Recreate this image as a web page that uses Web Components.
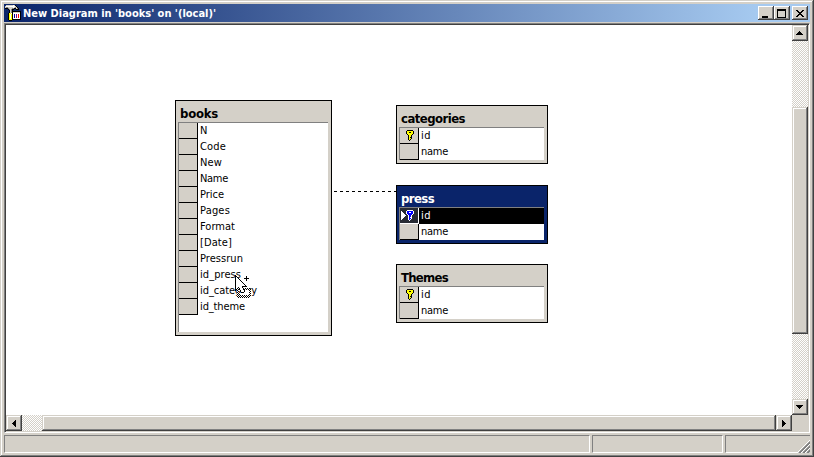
<!DOCTYPE html>
<html lang="en"><head><meta charset="utf-8"><title>New Diagram in 'books' on '(local)'</title>
<style>html,body{margin:0;width:814px;height:457px;overflow:hidden;background:#d4d0c8}body{font:11px "DejaVu Sans Condensed","DejaVu Sans",sans-serif;font-stretch:condensed;color:#000}</style></head>
<body><diagram-window></diagram-window>
<script>
const define=(name,css,html,setup)=>customElements.define(name,class extends HTMLElement{
  connectedCallback(){
    if(this.shadowRoot)return;
    const root=this.attachShadow({mode:'open'});
    root.innerHTML=`<style>*{box-sizing:border-box}:host{box-sizing:border-box}${css}</style>${html}`;
    if(setup)setup(this,root);
  }
});

// Bitmap icons: one character per pixel.
const palettes={K:'#000',Y:'#ffff00',W:'#fff',G:'#808080',L:'#d4d0c8',B:'#0000ff',D:'#404040',P:'#800080',R:'#ff0000',N:'#0000a0',O:'#808000'};
const key=[
'.kkkkkk.',
'kffffffk',
'kffkkffk',
'kffffffk',
'.kffffk.',
'..kffk..',
'..kffk..',
'..kfkk..',
'..kffk..',
'..kfk...',
'...k....'];
const paint=(a,k,f)=>a.map(r=>r.replace(/k/g,k).replace(/f/g,f));
const icons={
key:paint(key,'K','Y'),
keySelected:paint(key,'W','B'),
design:[
'.LLLLLLLWLK.....',
'LWWWWWWWWWLK....',
'LGGLLLLLWLGLK...',
'KKKGLLLGGKKLGK..',
'...KGLGKK..KKK..',
'....KLGK........',
'....KLGKKKKKKKKK',
'....KLGKLLLLLLLK',
'...KYYWKWWWWWWWK',
'...KYWYKWNWPWRWK',
'...KYWYKWNWPWRWK',
'...KYWYKWNWPWRWK',
'...KYWYKWNWPWRWK',
'...KYWYKWWWWWWWK',
'...KYYYKKKKKKKKK',
'....KKK.........'],
min:['KKKKKK','KKKKKK'],
max:['KKKKKKKKK','KKKKKKKKK','K.......K','K.......K','K.......K','K.......K','K.......K','K.......K','KKKKKKKKK'],
close:['KK....KK','.KK..KK.','..KKKK..','...KK...','..KKKK..','.KK..KK.','KK....KK'],
up:['...K...','..KKK..','.KKKKK.','KKKKKKK'],
down:['KKKKKKK','.KKKKK.','..KKK..','...K...'],
left:['...K','..KK','.KKK','KKKK','.KKK','..KK','...K'],
right:['K...','KK..','KKK.','KKKK','KKK.','KK..','K...'],
current:['W....','WW...','WWW..','WWWW.','WWWWW','WWWW.','WWW..','WW...','W....'],
cursor:[
'K................',
'KK.........K.....',
'KWK........K.....',
'KWWK.....KKKKK...',
'KWWWK......K.....',
'KWWWWK.....K.....',
'KWWWWWK..........',
'KWWWWWWK.........',
'KWWWWWWWK........',
'KWWWWWWWWK.......',
'KWWWWWWWWWK......',
'KWWWWWWKKKKK.....',
'KWWKWWWK.........',
'KWKWKWWWKWKWKWK..',
'KKWKKWWWKKWKWKWK.',
'K.KWWKWWWKWWWWKW.',
'..WK.KWWWKWWWWWK.',
'..KW..KKKWWWWWKW.',
'..WKWWWWWWWWWWWK.',
'..KWKWWWWWWWWWKW.',
'..WKWKWKWKWKWKWK.',
'..KWKWKWKWKWKWKW.',
'...KWKWKWKWKWKW..']};
define('pixel-icon',':host{display:block}svg{display:block}','<div></div>',(h,r)=>{
  const m=icons[h.getAttribute('name')],w=Math.max(...m.map(x=>x.length));
  let s='';m.forEach((row,y)=>{for(const q of row.matchAll(/([A-Z])\1*/g))s+=`<rect x="${q.index}" y="${y}" width="${q[0].length}" height="1" fill="${palettes[q[1]]}"/>`});
  r.querySelector('div').innerHTML=`<svg width="${w}" height="${m.length}" shape-rendering="crispEdges">${s}</svg>`;
});

// Text tracked to a given advance width.
define('fit-text',':host{display:inline-block;white-space:pre}span{display:inline-block}','<span></span>',(h,r)=>{
  const s=r.querySelector('span'),w=+h.getAttribute('width');
  s.textContent=h.getAttribute('text');
  const n=s.textContent.length,m=s.getBoundingClientRect().width;
  if(w&&n)s.style.letterSpacing=(w-m)/n+'px';
});

define('caption-button',':host{display:block;width:16px;height:14px;background:#d4d0c8;box-shadow:inset -1px -1px #404040,inset 1px 1px #fff,inset -2px -2px #808080;padding:var(--pad)}','<slot></slot>');
define('scroll-button',`:host{display:grid;flex:none;background:#d4d0c8;box-shadow:inset -1px -1px #404040,inset 1px 1px #d4d0c8,inset -2px -2px #808080,inset 2px 2px #fff;width:16px;height:16px;place-content:start;padding:var(--pad,0)}`,'<slot></slot>');
define('scroll-track',':host{display:flex;background:repeating-conic-gradient(#fff 0 25%,#d4d0c8 0 50%) 0 0/2px 2px}:host([vertical]){flex-direction:column}','<slot></slot>');

define('title-bar',`:host{display:flex;height:18px;padding:0 2px 0 1px;background:linear-gradient(90deg,#0a246a,#a6caf0 756px);color:#fff;font-weight:bold}
pixel-icon{margin-top:1px;width:16px}fit-text{margin-left:2px;line-height:20px;flex:1}caption-button{margin-top:2px}.c{margin-left:2px}`,
`<pixel-icon name="design"></pixel-icon><fit-text width="193" text="New Diagram in 'books' on '(local)'"></fit-text>
<caption-button style="--pad:9px 0 0 4px"><pixel-icon name="min"></pixel-icon></caption-button>
<caption-button style="--pad:2px 0 0 3px"><pixel-icon name="max"></pixel-icon></caption-button>
<caption-button class="c" style="--pad:3px 0 0 4px"><pixel-icon name="close"></pixel-icon></caption-button>`);

define('table-row',`:host{display:flex;height:16px;color:#000}
.h{width:19px;height:16px;background:#d4d0c8;border-right:1px solid #000;border-bottom:1px solid #000;display:flex;justify-content:flex-end;padding:2px 4px 0 0;flex:none}
.t{flex:1;padding-left:2px;line-height:15px}
:host([selected]) .h{background:#282c34;border-color:#fff}:host([selected]) .t{background:#000;color:#fff}`,
'<div class="h"></div><div class="t"></div>',(h,r)=>{
  const k=h.hasAttribute('key'),s=h.hasAttribute('selected');
  r.querySelector('.h').innerHTML=(s?'<pixel-icon name="current" style="margin-top:1px"></pixel-icon>':'')+(k?`<pixel-icon name="${s?'keySelected':'key'}"></pixel-icon>`:'');
  r.querySelector('.t').innerHTML=`<fit-text width="${h.getAttribute('w')}" text="${h.getAttribute('text')}"></fit-text>`;
});
define('db-table',`:host{display:flex;flex-direction:column;position:absolute;background:#d4d0c8;border:1px solid #000;padding:0 3px 3px 2px}
:host([active]){background:#0a246a;color:#fff}
.n{height:21px;font-size:13px;font-weight:bold;line-height:26px;padding-left:2px;overflow:visible}
.g{flex:1;background:#fff;border-left:1px solid #808080;border-top:1px solid #808080}`,
'<div class="n"></div><div class="g"><slot></slot></div>',(h,r)=>{
  r.querySelector('.n').innerHTML=`<fit-text width="${h.getAttribute('w')}" text="${h.getAttribute('name')}"></fit-text>`;
});

const cols=[['N',8],['Code',26],['New',22],['Name',28],['Price',24],['Pages',30],['Format',35],['[Date]',32],['Pressrun',43],['id_press',41],['id_category',57],['id_theme',45]];
const small=s=>`<table-row key ${s} text="id" w="10"></table-row><table-row text="name" w="27"></table-row>`;
define('diagram-canvas',':host{display:block;position:relative;background:#fff;overflow:hidden}.link{position:absolute;left:328px;top:166px;width:62px;height:1px;background:repeating-linear-gradient(90deg,#000 0 3px,#fff 3px 6px)}.cur{position:absolute;left:229px;top:250px}',
`<db-table name="books" w="38" style="left:169px;top:75px;width:157px;height:236px">${cols.map(c=>`<table-row text="${c[0]}" w="${c[1]}"></table-row>`).join('')}</db-table>
<div class="link"></div>
<db-table name="categories" w="64" style="left:390px;top:80px;width:152px;height:59px">${small('')}</db-table>
<db-table active name="press" w="33" style="left:390px;top:160px;width:152px;height:59px">${small('selected')}</db-table>
<db-table name="Themes" w="47" style="left:390px;top:239px;width:152px;height:59px">${small('')}</db-table>
<pixel-icon class="cur" name="cursor"></pixel-icon>`);

define('diagram-view',`:host{display:grid;grid-template:390px 16px/786px 16px;margin-top:1px;border:1px solid;border-color:#808080 #fff #fff #808080;box-shadow:inset 1px 1px #404040;padding:1px;background:#d4d0c8}`,
`<diagram-canvas></diagram-canvas>
<scroll-track vertical>
<scroll-button style="--pad:6px 0 0 4px"><pixel-icon name="up"></pixel-icon></scroll-button>
<scroll-button style="height:227px;margin:66px 0 65px"></scroll-button>
<scroll-button style="--pad:6px 0 0 4px"><pixel-icon name="down"></pixel-icon></scroll-button></scroll-track>
<scroll-track>
<scroll-button style="--pad:5px 0 0 6px"><pixel-icon name="left"></pixel-icon></scroll-button>
<scroll-button style="width:734px;margin-left:20px"></scroll-button>
<scroll-button style="--pad:5px 0 0 6px"><pixel-icon name="right"></pixel-icon></scroll-button></scroll-track>`);

define('status-bar',`:host{display:grid;grid-template-columns:586px 131px 85px;gap:2px;height:18px;margin-top:2px}
div{border:1px solid;border-color:#808080 #fff #fff #808080}.l{border-right:0;display:flex;justify-content:flex-end;align-items:flex-end;border-bottom-color:#fff}svg{display:block;margin-bottom:-1px;background:none}`,
`<div></div><div></div><div class="l"><svg width="13" height="13"><g fill="none" stroke-width="2" stroke="#808080"><path d="M2 13.5L14 1.5M6 13.5L14 5.5M10 13.5L14 9.5"/><path stroke="#fff" stroke-width="1" d="M0 13L13 0M4 13L13 4M8 13L13 8"/></g></svg></div>`);

define('diagram-window',`:host{display:flex;flex-direction:column;width:814px;height:457px;background:#d4d0c8;padding:4px;box-shadow:inset -1px -1px #404040,inset 1px 1px #d4d0c8,inset -2px -2px #808080,inset 2px 2px #fff}`,
`<title-bar></title-bar><diagram-view></diagram-view><status-bar></status-bar>`);
</script></body></html>
